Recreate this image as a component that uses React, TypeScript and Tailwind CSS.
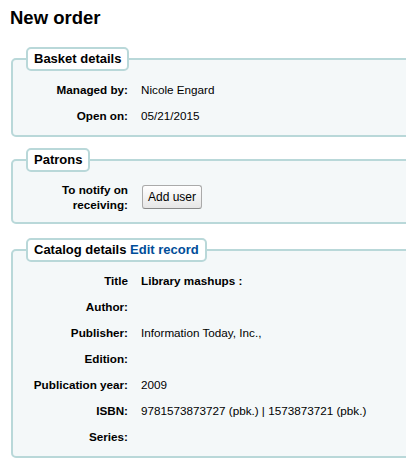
import type { ReactNode } from "react";

function Row({ label, children, bold }: { label: string; children?: ReactNode; bold?: boolean }) {
  return (
    <div className="flex h-[26px] items-center">
      <div className="w-[102px] shrink-0 text-right font-bold">{label}</div>
      <div className={"ml-[13px] " + (bold ? "font-bold" : "")}>{children}</div>
    </div>
  );
}

function Box({ legend, children }: { legend: ReactNode; children: ReactNode }) {
  return (
    <fieldset className="w-[420px] rounded-[5px] border-2 border-[#b9d8d9] bg-[#f4f8f9] pl-[13px] pr-0 pt-[6px] pb-[6px]">
      <legend className="rounded-[5px] border-2 border-[#b9d8d9] bg-white px-[6px] py-[1px] text-[13px] leading-[18px] font-bold">
        {legend}
      </legend>
      {children}
    </fieldset>
  );
}

export default function App() {
  return (
    <div
      className="h-[466px] w-[406px] overflow-hidden bg-white pl-[11px] text-[11.7px] text-black"
      style={{ fontFamily: '"Liberation Sans", Arial, sans-serif' }}
    >
      <h1 className="pt-[6px] -ml-[1px] text-[18.5px] leading-[24px] font-bold">New order</h1>
      <div className="mt-[17px] flex flex-col gap-[11px]">
        <Box legend="Basket details">
          <Row label="Managed by:">Nicole Engard</Row>
          <Row label="Open on:">05/21/2015</Row>
        </Box>
        <div className="-mt-[0px]">
          <Box legend="Patrons">
            <div className="flex h-[38px] items-center">
              <div className="w-[102px] shrink-0 text-right leading-[15px] font-bold">
                To notify on
                <br />
                receiving:
              </div>
              <button className="ml-[14px] h-[24px] w-[60px] rounded-[3px] border border-[#aaaaaa] border-b-[#888888] bg-gradient-to-b from-white to-[#e6e6e6] text-[12px] leading-[22px] text-black">
                Add user
              </button>
            </div>
          </Box>
        </div>
        <div className="mt-[3px]">
          <Box
            legend={
              <>
                Catalog details <span className="text-[#004d99]">Edit record</span>
              </>
            }
          >
            <Row label="Title" bold>
              Library mashups :
            </Row>
            <Row label="Author:" />
            <Row label="Publisher:">Information Today, Inc.,</Row>
            <Row label="Edition:" />
            <Row label="Publication year:">2009</Row>
            <Row label="ISBN:">9781573873727 (pbk.) | 1573873721 (pbk.)</Row>
            <Row label="Series:" />
          </Box>
        </div>
      </div>
    </div>
  );
}
